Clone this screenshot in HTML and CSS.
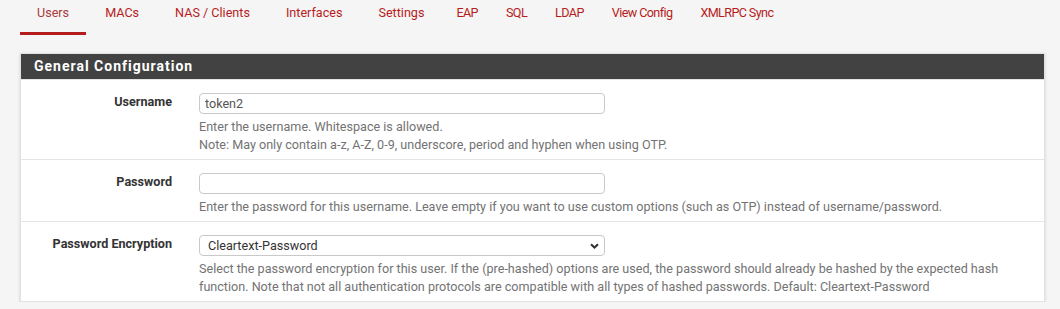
FILE: index.html
```html
<!DOCTYPE html>
<html lang="en">
<head>
  <meta charset="UTF-8" />
  <title>FreeRADIUS: Users</title>
  <link rel="stylesheet" href="styles.css">
</head>
<body>
  <ul class="tabs">
    <li class="active"><a href="#">Users</a></li>
    <li><a href="#">MACs</a></li>
    <li><a href="#">NAS / Clients</a></li>
    <li><a href="#">Interfaces</a></li>
    <li><a href="#">Settings</a></li>
    <li class="narrow"><a href="#">EAP</a></li>
    <li class="narrow"><a href="#">SQL</a></li>
    <li class="narrow"><a href="#">LDAP</a></li>
    <li class="narrow"><a href="#">View Config</a></li>
    <li class="narrow"><a href="#">XMLRPC Sync</a></li>
  </ul>

  <div class="panel">
    <h2 class="panel-title">General Configuration</h2>

    <div class="form-row">
      <label class="row-label" for="username">Username</label>
      <div class="row-body">
        <input type="text" id="username" value="token2" />
        <div class="help">
          Enter the username. Whitespace is allowed.<br>
          Note: May only contain a-z, A-Z, 0-9, underscore, period and hyphen when using OTP.
        </div>
      </div>
    </div>

    <div class="form-row">
      <label class="row-label" for="password">Password</label>
      <div class="row-body">
        <input type="password" id="password" />
        <div class="help">Enter the password for this username. Leave empty if you want to use custom options (such as OTP) instead of username/password.</div>
      </div>
    </div>

    <div class="form-row">
      <label class="row-label" for="encryption">Password Encryption</label>
      <div class="row-body">
        <div class="select-wrap">
          <select id="encryption">
            <option>Cleartext-Password</option>
            <option>MD5-Password</option>
            <option>NT-Password</option>
          </select>
          <svg class="chevron" width="9" height="6" viewBox="0 0 9 6"><path d="M1 1.2 L4.5 4.5 L8 1.2" fill="none" stroke="#333" stroke-width="2.1"/></svg>
        </div>
        <div class="help">Select the password encryption for this user. If the (pre-hashed) options are used, the password should already be hashed by the expected hash function. Note that not all authentication protocols are compatible with all types of hashed passwords. Default: Cleartext-Password</div>
      </div>
    </div>
  </div>
</body>
</html>
```

FILE: styles.css
```css
* { margin: 0; padding: 0; box-sizing: border-box; }

body {
  font-family: Roboto, "Liberation Sans", sans-serif;
  font-size: 12.6px;
  line-height: 18px;
  color: #333;
  background: #f5f5f5;
  padding: 3px 15px 0 20px;
}

/* Tabs */
.tabs {
  list-style: none;
  display: flex;
  height: 50px;
}

.tabs li {
  margin-right: 2px;
}

.tabs a {
  display: block;
  padding: 1px 17px 10px;
  color: #b71c1c;
  text-decoration: none;
  border-bottom: 3px solid transparent;
}

.tabs li.narrow a {
  padding: 1px 13px 10px;
  letter-spacing: -0.6px;
}

.tabs li.active a {
  color: #a83a3a;
  border-bottom-color: #b71c1c;
}

/* Panel */
.panel {
  background: #fff;
  border: 1px solid #e2e2e2;
  box-shadow: 0 1px 3px rgba(0, 0, 0, 0.15);
}

.panel-title {
  background: #424242;
  color: #fff;
  font-size: 14px;
  font-weight: bold;
  letter-spacing: 1px;
  line-height: 25px;
  padding-left: 13px;
  border-bottom: 1px solid #e4e4e4;
}

.form-row {
  display: flex;
  padding: 13px 14px 5px 0;
  border-top: 1px solid #e4e4e4;
}

.panel-title + .form-row {
  border-top: none;
}

.row-label {
  flex: 0 0 151px;
  text-align: right;
  font-weight: bold;
  color: #333;
}

.row-body {
  flex: 1;
  margin-left: 27px;
}

input[type="text"],
input[type="password"],
select {
  display: block;
  width: 406px;
  height: 21px;
  border: 1px solid #c9c9c9;
  border-radius: 4px;
  font-family: inherit;
  font-size: 12.6px;
  color: #555;
  padding: 0 5px;
  background: #fff;
}

.select-wrap {
  position: relative;
  width: 406px;
}

select {
  appearance: none;
  -webkit-appearance: none;
  padding-left: 8px;
  color: #333;
}

.chevron {
  position: absolute;
  right: 6px;
  top: 8px;
}

.help {
  margin-top: 4px;
  color: #737373;
}
```
